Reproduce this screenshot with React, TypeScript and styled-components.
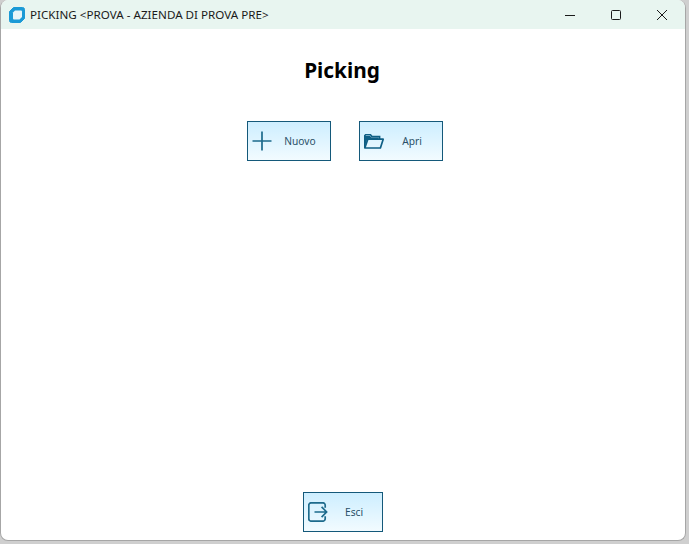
import styled, { createGlobalStyle } from 'styled-components';

const GlobalStyle = createGlobalStyle`
  html, body {
    margin: 0;
    padding: 0;
    width: 689px;
    height: 544px;
    overflow: hidden;
    background: #cfcfcf;
    font-family: 'Noto Sans', 'Open Sans', sans-serif;
  }
`;

const AppIcon = () => (
  <svg width="16" height="16" viewBox="0 0 16 16">
    <path d="M4.5 0.5H13.5Q15.5 0.5 15.5 2.5V11.5L11.5 15.5H2.5Q0.5 15.5 0.5 13.5V4.5Z" fill="#1b9ad6" stroke="#1b9ad6" strokeLinejoin="round" />
    <path d="M6 3.5H12a1 1 0 0 1 1 1v5.5l-2.5 2.5H5a1 1 0 0 1-1-1V5.5Z" fill="#e8f5f8" />
  </svg>
);

const PlusIcon = () => (
  <svg width="20" height="20" viewBox="0 0 20 20" fill="none" stroke="#1c6a8c" strokeWidth="1.7">
    <path d="M10 0.5V19.5M0.5 10H19.5" />
  </svg>
);

const FolderIcon = () => (
  <svg width="20" height="15" viewBox="0 0 20 15">
    <path d="M0.8 14V1.6L1.6 0.8H6.5L8 2.6H15.6V5" fill="none" stroke="#0f5f85" strokeWidth="1.6" />
    <path d="M0.8 14L3.8 5.2H19.2L16.4 14Z" fill="none" stroke="#0f5f85" strokeWidth="1.7" strokeLinejoin="round" />
    <path d="M0.8 13V2H6L7.5 3.5H14.5V5.4H3.2L0.8 12Z" fill="#0f5f85" />
  </svg>
);

const ExitIcon = () => (
  <svg width="20" height="20" viewBox="0 0 20 20" fill="none" stroke="#1c6a8c" strokeWidth="1.7">
    <path d="M17.2 5.8V3.2A2.4 2.4 0 0 0 14.8 0.8H3.2A2.4 2.4 0 0 0 0.8 3.2V16.8A2.4 2.4 0 0 0 3.2 19.2H14.8A2.4 2.4 0 0 0 17.2 16.8V14.2" />
    <path d="M6.5 10H18.6M13.6 4.8L18.6 10L13.6 15.2" />
  </svg>
);

const MinimizeIcon = () => (
  <svg width="10" height="10" viewBox="0 0 10 10" fill="none" stroke="#1a1a1a" strokeWidth="1">
    <path d="M0 5.5H10" />
  </svg>
);

const MaximizeIcon = () => (
  <svg width="10" height="10" viewBox="0 0 10 10" fill="none" stroke="#1a1a1a" strokeWidth="1">
    <rect x="0.5" y="0.5" width="9" height="9" rx="1" />
  </svg>
);

const CloseIcon = () => (
  <svg width="10" height="10" viewBox="0 0 10 10" fill="none" stroke="#1a1a1a" strokeWidth="1">
    <path d="M0 0L10 10M10 0L0 10" />
  </svg>
);

const App = () => {
  return (
    <>
      <GlobalStyle />
      <Window>
        <TitleBar>
          <TitleLeft>
            <AppIcon />
            <TitleText>PICKING &lt;PROVA - AZIENDA DI PROVA PRE&gt;</TitleText>
          </TitleLeft>
          <WindowControls>
            <ControlButton><MinimizeIcon /></ControlButton>
            <ControlButton><MaximizeIcon /></ControlButton>
            <ControlButton><CloseIcon /></ControlButton>
          </WindowControls>
        </TitleBar>
        <Content>
          <Heading>Picking</Heading>
          <ActionRow>
            <ActionButton $width={84}>
              <IconSlot><PlusIcon /></IconSlot>
              <ButtonLabel>Nuovo</ButtonLabel>
            </ActionButton>
            <ActionButton $width={84}>
              <IconSlot><FolderIcon /></IconSlot>
              <ButtonLabel>Apri</ButtonLabel>
            </ActionButton>
          </ActionRow>
          <Footer>
            <ActionButton $width={80}>
              <IconSlot><ExitIcon /></IconSlot>
              <ButtonLabel>Esci</ButtonLabel>
            </ActionButton>
          </Footer>
        </Content>
      </Window>
    </>
  );
};

export default App;

const Window = styled.div`
  box-sizing: border-box;
  width: 686px;
  height: 541px;
  display: flex;
  flex-direction: column;
  background: #ffffff;
  border: 1px solid #a6a6a6;
  border-top: none;
  border-radius: 8px;
  overflow: hidden;
`;

const TitleBar = styled.div`
  height: 29px;
  flex-shrink: 0;
  display: flex;
  align-items: center;
  justify-content: space-between;
  background: #e8f5f0;
`;

const TitleLeft = styled.div`
  display: flex;
  align-items: center;
  gap: 5px;
  padding-left: 8px;
`;

const TitleText = styled.span`
  font-size: 11.65px;
  color: #1a1a1a;
  white-space: nowrap;
`;

const WindowControls = styled.div`
  display: flex;
`;

const ControlButton = styled.div`
  width: 46px;
  height: 29px;
  display: flex;
  align-items: center;
  justify-content: center;
`;

const Content = styled.div`
  flex: 1;
  display: flex;
  flex-direction: column;
  align-items: center;
  min-height: 0;
`;

const Heading = styled.h1`
  margin: 24px 2px 0 0;
  font-size: 20.8px;
  line-height: 34px;
  font-weight: 700;
  color: #000000;
`;

const ActionRow = styled.div`
  display: flex;
  gap: 28px;
  margin-top: 34px;
  margin-left: 4px;
`;

const ActionButton = styled.div<{ $width: number }>`
  box-sizing: border-box;
  width: ${(props) => props.$width}px;
  height: 40px;
  display: flex;
  align-items: center;
  border: 1px solid #14597a;
  background: linear-gradient(180deg, #cdeeff 0%, #f2fbff 100%);
`;

const IconSlot = styled.div`
  width: 20px;
  margin-left: 4px;
  display: flex;
  justify-content: center;
`;

const ButtonLabel = styled.span`
  flex: 1;
  text-align: center;
  font-size: 10.2px;
  color: #2a5068;
  padding-left: 1px;
  padding-right: 3px;
`;

const Footer = styled.div`
  margin-top: auto;
  margin-bottom: 8px;
`;
